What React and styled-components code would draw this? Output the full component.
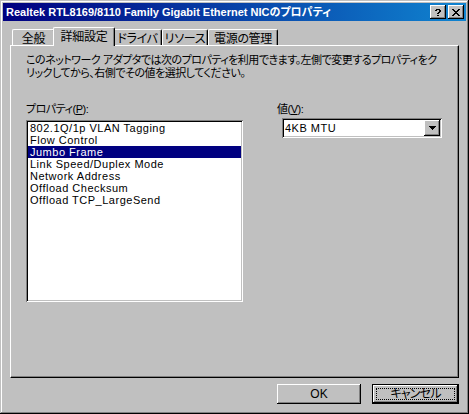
import React from "react";
import styled, { createGlobalStyle } from "styled-components";

const GlobalStyle = createGlobalStyle`
  html, body {
    margin: 0;
    padding: 0;
    background: #c0c0c0;
  }
  * {
    box-sizing: border-box;
  }
`;

const uiFont = `"Liberation Sans", "Noto Sans CJK JP", sans-serif`;

const Window = styled.div`
  width: 469px;
  height: 414px;
  padding: 3px;
  display: flex;
  flex-direction: column;
  background: #c0c0c0;
  box-shadow: inset -1px -1px #000, inset 1px 1px #c0c0c0,
    inset -2px -2px #808080, inset 2px 2px #fff;
  font-family: ${uiFont};
  font-size: 12px;
  font-feature-settings: "palt";
  color: #000;
`;

const TitleBar = styled.div`
  height: 18px;
  display: flex;
  align-items: center;
  padding: 0 2px 0 3px;
  background: linear-gradient(to right, #000080, #1084d0);
`;

const Title = styled.div`
  flex: 1;
  color: #fff;
  font-weight: bold;
  font-size: 11px;
  line-height: 18px;
  white-space: nowrap;
`;

const CaptionButtons = styled.div`
  display: flex;
  gap: 2px;
`;

const CaptionButton = styled.div`
  width: 16px;
  height: 14px;
  display: flex;
  align-items: center;
  justify-content: center;
  background: #c0c0c0;
  box-shadow: inset -1px -1px #000, inset 1px 1px #fff,
    inset -2px -2px #808080;
`;

const Body = styled.div`
  flex: 1;
  display: flex;
  flex-direction: column;
  padding: 6px 7px 7px;
`;

const TabStrip = styled.div`
  height: 18px;
  display: flex;
  align-items: flex-end;
  padding-left: 2px;
  position: relative;
  z-index: 1;
`;

const Tab = styled.div`
  width: ${(p) => (p.$active ? p.$w + 4 : p.$w)}px;
  height: ${(p) => (p.$active ? 19 : 16)}px;
  margin: 0 ${(p) => (p.$active ? -2 : 0)}px ${(p) => (p.$active ? -1 : 0)}px;
  position: relative;
  z-index: ${(p) => (p.$active ? 2 : 1)};
  padding-top: 3px;
  line-height: 12px;
  text-align: center;
  white-space: nowrap;
  letter-spacing: -0.3px;
  background: #c0c0c0;
  border-top: 1px solid #fff;
  border-left: 1px solid #fff;
  border-right: 1px solid #000;
  border-radius: 2px 2px 0 0;
  box-shadow: inset -1px 0 #808080;
`;

const Panel = styled.div`
  height: 333px;
  padding: 8px 15px 0;
  background: #c0c0c0;
  border-top: 1px solid #fff;
  border-left: 1px solid #fff;
  border-right: 1px solid #000;
  border-bottom: 1px solid #000;
  box-shadow: inset -1px -1px #808080;
`;

const Description = styled.p`
  margin: 0;
  font-size: 11px;
  line-height: 13px;
  white-space: nowrap;
  letter-spacing: -0.5px;
`;

const Columns = styled.div`
  display: grid;
  grid-template-columns: 217px 165px;
  column-gap: 34px;
  margin-top: 23px;
`;

const Field = styled.div`
  display: flex;
  flex-direction: column;
`;

const Label = styled.label`
  font-size: 11px;
  line-height: 13px;
  letter-spacing: -0.5px;
  margin-bottom: ${(p) => p.$gap}px;
  u {
    text-decoration: underline;
    text-underline-offset: 1px;
  }
`;

const ListBox = styled.div`
  height: 182px;
  padding: 2px;
  background: #fff;
  box-shadow: inset 1px 1px #808080, inset -1px -1px #fff,
    inset 2px 2px #000, inset -2px -2px #c0c0c0;
`;

const ListItem = styled.div`
  height: 12px;
  font-family: "Liberation Sans", sans-serif;
  font-size: 11px;
  line-height: 12px;
  letter-spacing: 0.5px;
  padding-left: 2px;
  white-space: nowrap;
  background: ${(p) => (p.$selected ? "#000080" : "transparent")};
  color: ${(p) => (p.$selected ? "#fff" : "#000")};
`;

const Combo = styled.div`
  width: 160px;
  height: 20px;
  margin-left: 5px;
  padding: 2px;
  display: flex;
  align-items: center;
  background: #fff;
  box-shadow: inset 1px 1px #808080, inset -1px -1px #fff,
    inset 2px 2px #000, inset -2px -2px #c0c0c0;
`;

const ComboText = styled.span`
  flex: 1;
  padding-left: 1px;
  font-size: 11px;
  letter-spacing: 0.5px;
  line-height: 16px;
`;

const DropButton = styled.div`
  width: 16px;
  height: 16px;
  display: flex;
  align-items: center;
  justify-content: center;
  background: #c0c0c0;
  box-shadow: inset -1px -1px #000, inset 1px 1px #fff,
    inset -2px -2px #808080;
`;

const ButtonRow = styled.div`
  display: flex;
  justify-content: flex-end;
  gap: 11px;
  margin-top: 6px;
`;

const Button = styled.div`
  width: ${(p) => p.$w}px;
  height: 20px;
  position: relative;
  display: flex;
  align-items: center;
  justify-content: center;
  background: #c0c0c0;
  line-height: 12px;
  letter-spacing: ${(p) => (p.$default ? "-0.8px" : "0")};
  border: ${(p) => (p.$default ? "1px solid #000" : "none")};
  box-shadow: inset -1px -1px #000, inset 1px 1px #fff,
    inset -2px -2px #808080;

  &::after {
    content: "";
    display: ${(p) => (p.$default ? "block" : "none")};
    position: absolute;
    inset: 3px;
    border: 1px dotted #000;
  }
`;

const HelpGlyph = () => (
  <svg width="6" height="7" viewBox="0 0 6 7" shapeRendering="crispEdges">
    <path
      d="M1 0h4v1H1zM0 1h2v1H0zM4 1h2v2H4zM3 3h2v1H3zM2 4h2v1H2zM2 6h2v1H2z"
      fill="#000"
    />
  </svg>
);

const CloseGlyph = () => (
  <svg width="8" height="7" viewBox="0 0 8 7" shapeRendering="crispEdges">
    <path
      d="M0 0h2v1H0zM6 0h2v1H6zM1 1h2v1H1zM5 1h2v1H5zM2 2h4v1H2zM3 3h2v1H3zM2 4h4v1H2zM1 5h2v1H1zM5 5h2v1H5zM0 6h2v1H0zM6 6h2v1H6z"
      fill="#000"
    />
  </svg>
);

const ArrowGlyph = () => (
  <svg width="7" height="4" viewBox="0 0 7 4" shapeRendering="crispEdges">
    <path d="M0 0h7v1H0zM1 1h5v1H1zM2 2h3v1H2zM3 3h1v1H3z" fill="#000" />
  </svg>
);

const tabs = [
  { label: "全般", w: 43 },
  { label: "詳細設定", w: 58, active: true },
  { label: "ドライバ", w: 49 },
  { label: "リソース", w: 46 },
  { label: "電源の管理", w: 70 },
];

const properties = [
  "802.1Q/1p VLAN Tagging",
  "Flow Control",
  "Jumbo Frame",
  "Link Speed/Duplex Mode",
  "Network Address",
  "Offload Checksum",
  "Offload TCP_LargeSend",
];

const App = () => (
  <>
    <GlobalStyle />
    <Window>
      <TitleBar>
        <Title>Realtek RTL8169/8110 Family Gigabit Ethernet NICのプロパティ</Title>
        <CaptionButtons>
          <CaptionButton>
            <HelpGlyph />
          </CaptionButton>
          <CaptionButton>
            <CloseGlyph />
          </CaptionButton>
        </CaptionButtons>
      </TitleBar>
      <Body>
        <TabStrip>
          {tabs.map((t) => (
            <Tab key={t.label} $w={t.w} $active={t.active}>
              {t.label}
            </Tab>
          ))}
        </TabStrip>
        <Panel>
          <Description>
            このネットワーク アダプタでは次のプロパティを利用できます。左側で変更するプロパティをク
            <br />
            リックしてから、右側でその値を選択してください。
          </Description>
          <Columns>
            <Field>
              <Label $gap={4}>
                プロパティ(<u>P</u>):
              </Label>
              <ListBox>
                {properties.map((name) => (
                  <ListItem key={name} $selected={name === "Jumbo Frame"}>
                    {name}
                  </ListItem>
                ))}
              </ListBox>
            </Field>
            <Field>
              <Label $gap={2}>
                値(<u>V</u>):
              </Label>
              <Combo>
                <ComboText>4KB MTU</ComboText>
                <DropButton>
                  <ArrowGlyph />
                </DropButton>
              </Combo>
            </Field>
          </Columns>
        </Panel>
        <ButtonRow>
          <Button $w={84}>OK</Button>
          <Button $w={87} $default>
            キャンセル
          </Button>
        </ButtonRow>
      </Body>
    </Window>
  </>
);

export default App;
